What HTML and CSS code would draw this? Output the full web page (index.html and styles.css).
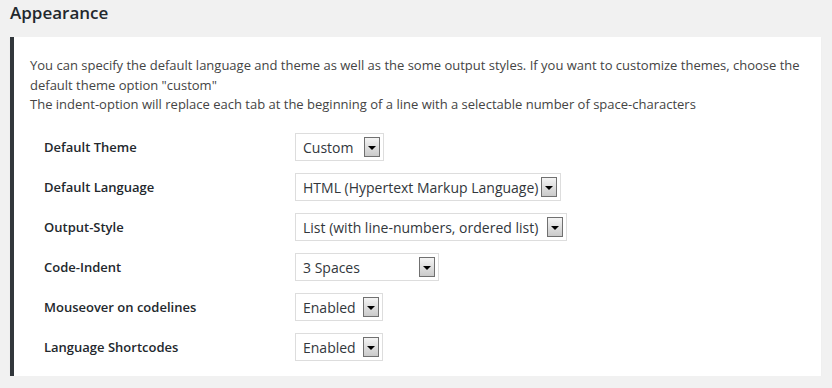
FILE: index.html
```html
<!DOCTYPE html>
<html>
<head>
<meta charset="utf-8">
<link rel="stylesheet" href="styles.css">
</head>
<body>
<h2 class="title">Appearance</h2>
<div class="panel">
  <p class="desc">You can specify the default language and theme as well as the some output styles. If you want to customize themes, choose the default theme option "custom"<br>The indent-option will replace each tab at the beginning of a line with a selectable number of space-characters</p>
  <div class="rows">
    <div class="row">
      <div class="label">Default Theme</div>
      <div class="select w-theme"><span class="value">Custom</span><span class="btn"><span class="tri"></span></span></div>
    </div>
    <div class="row">
      <div class="label">Default Language</div>
      <div class="select w-lang"><span class="value">HTML (Hypertext Markup Language)</span><span class="btn"><span class="tri"></span></span></div>
    </div>
    <div class="row">
      <div class="label">Output-Style</div>
      <div class="select w-style"><span class="value">List (with line-numbers, ordered list)</span><span class="btn"><span class="tri"></span></span></div>
    </div>
    <div class="row">
      <div class="label">Code-Indent</div>
      <div class="select w-indent"><span class="value">3 Spaces</span><span class="btn"><span class="tri"></span></span></div>
    </div>
    <div class="row">
      <div class="label">Mouseover on codelines</div>
      <div class="select w-enabled"><span class="value">Enabled</span><span class="btn"><span class="tri"></span></span></div>
    </div>
    <div class="row">
      <div class="label">Language Shortcodes</div>
      <div class="select w-enabled"><span class="value">Enabled</span><span class="btn"><span class="tri"></span></span></div>
    </div>
  </div>
</div>
</body>
</html>
```
FILE: styles.css
```css
html, body {
  margin: 0;
  padding: 0;
  background: #f1f1f1;
  font-family: "Open Sans", "Liberation Sans", sans-serif;
  color: #444;
}
.title {
  margin: 0;
  padding: 1px 10px 0;
  font-size: 17px;
  line-height: 24px;
  font-weight: 600;
  color: #23282d;
}
.panel {
  margin: 12px 11px 0 10px;
  background: #fff;
  border-left: 4px solid #32373c;
  box-shadow: 0 1px 1px rgba(0, 0, 0, 0.06);
  padding: 19px 20px 9px 16px;
}
.desc {
  margin: 0 0 12.5px;
  font-size: 13px;
  line-height: 19.5px;
  color: #444;
}
.rows {
  display: flex;
  flex-direction: column;
  padding-left: 14px;
}
.row {
  height: 40px;
  display: flex;
  align-items: center;
}
.label {
  width: 251px;
  flex: none;
  font-size: 13px;
  line-height: 19.5px;
  font-weight: 600;
  color: #23282d;
  padding-top: 1px;
}
.select {
  box-sizing: border-box;
  height: 28px;
  border: 1px solid #ddd;
  background: #fff;
  display: flex;
  align-items: center;
  padding: 0 3px 0 7px;
  font-size: 14px;
  color: #32373c;
}
.value {
  flex: 1;
  white-space: nowrap;
  overflow: hidden;
}
.btn {
  box-sizing: border-box;
  width: 16px;
  height: 20px;
  flex: none;
  border: 1px solid #707070;
  background: linear-gradient(#f4f4f4, #cacaca);
  display: flex;
  align-items: center;
  justify-content: center;
}
.tri {
  width: 0;
  height: 0;
  border-left: 4px solid transparent;
  border-right: 4px solid transparent;
  border-top: 4px solid #000;
  margin-top: 1px;
}
.w-theme { width: 89px; }
.w-lang { width: 266px; }
.w-style { width: 272px; }
.w-indent { width: 144px; }
.w-enabled { width: 88px; }
```
